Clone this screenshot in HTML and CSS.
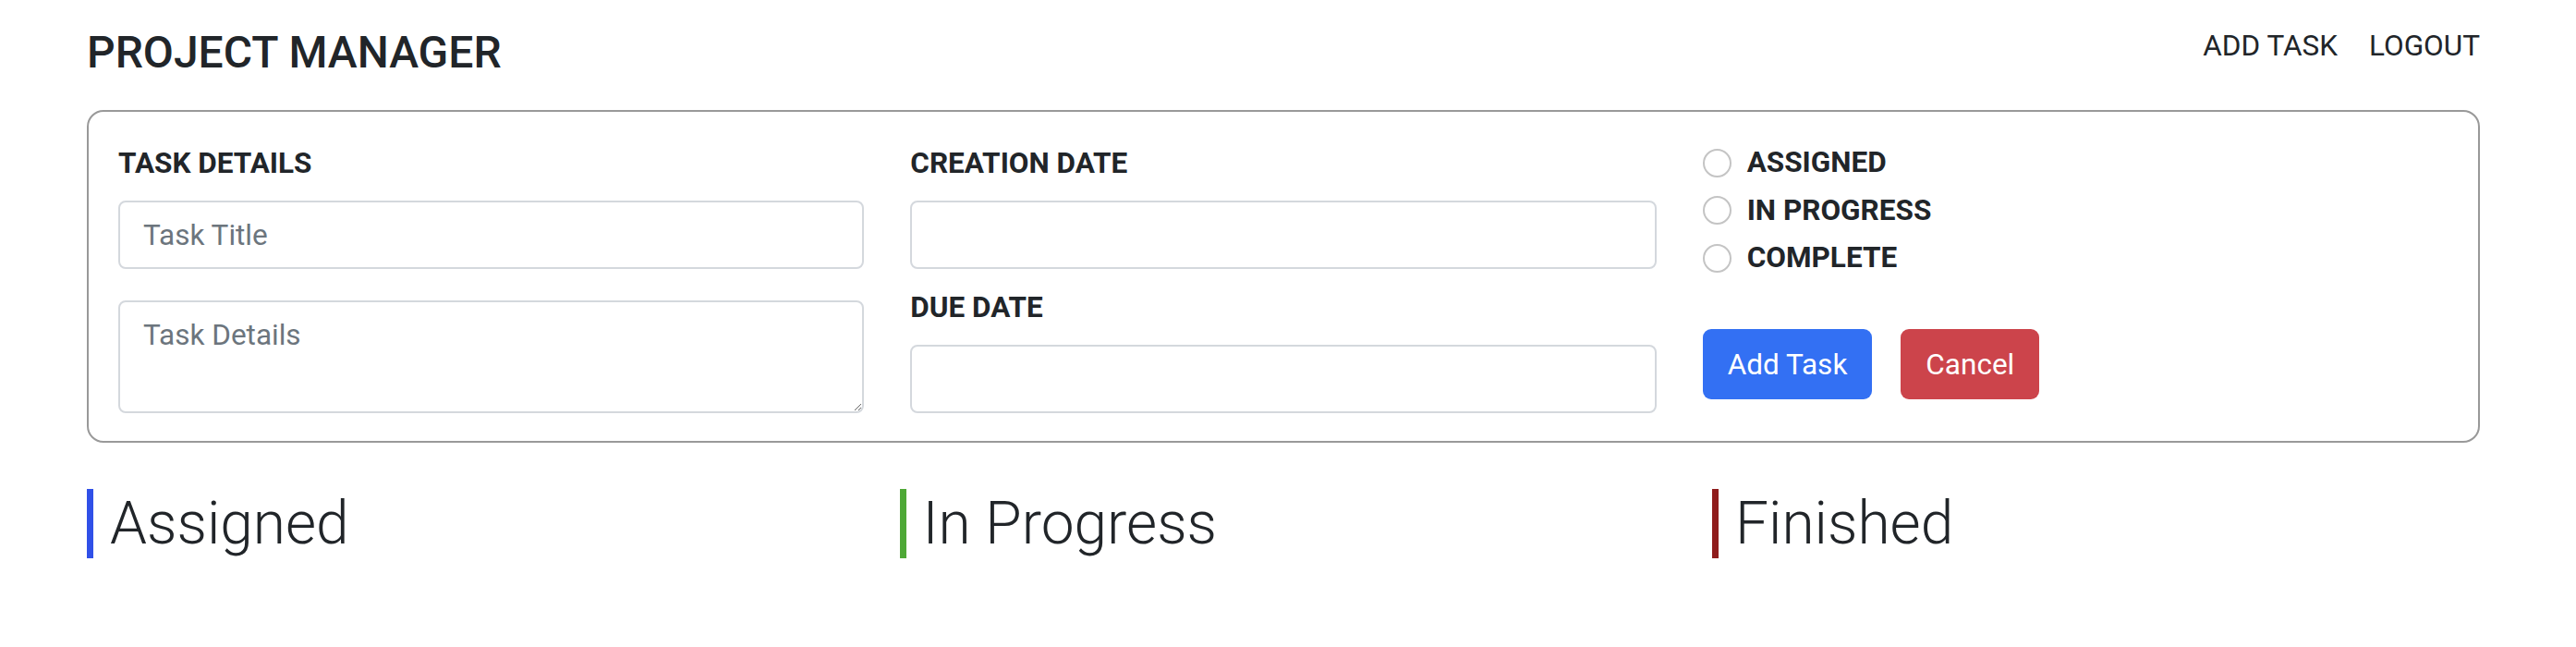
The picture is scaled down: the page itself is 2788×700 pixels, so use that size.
FILE: index.html
```html
<!DOCTYPE html>
<html lang="en">
<head>
<meta charset="utf-8">
<title>Project Manager</title>
<link rel="stylesheet" href="styles.css">
</head>
<body>
<div class="page">
  <header class="topbar">
    <h1 class="brand">PROJECT MANAGER</h1>
    <nav class="nav">
      <a class="nav-link" href="#">ADD TASK</a>
      <a class="nav-link" href="#">LOGOUT</a>
    </nav>
  </header>

  <form class="task-card">
    <div class="col">
      <label class="field-label">TASK DETAILS</label>
      <input class="control" type="text" placeholder="Task Title">
      <textarea class="control area" placeholder="Task Details"></textarea>
    </div>
    <div class="col">
      <div class="group">
        <label class="field-label">CREATION DATE</label>
        <input class="control" type="text">
      </div>
      <div class="group">
        <label class="field-label">DUE DATE</label>
        <input class="control" type="text">
      </div>
    </div>
    <div class="col">
      <div class="radios">
        <label class="radio-row"><input class="radio" type="radio" name="status"><span>ASSIGNED</span></label>
        <label class="radio-row"><input class="radio" type="radio" name="status"><span>IN PROGRESS</span></label>
        <label class="radio-row"><input class="radio" type="radio" name="status"><span>COMPLETE</span></label>
      </div>
      <div class="actions">
        <button type="button" class="btn btn-primary">Add Task</button>
        <button type="button" class="btn btn-danger">Cancel</button>
      </div>
    </div>
  </form>

  <section class="lanes">
    <h2 class="lane-title lane-blue">Assigned</h2>
    <h2 class="lane-title lane-green">In Progress</h2>
    <h2 class="lane-title lane-red">Finished</h2>
  </section>
</div>
</body>
</html>
```

FILE: styles.css
```css
* { box-sizing: border-box; }

html, body {
  margin: 0;
  padding: 0;
  background: #ffffff;
}

body {
  font-family: Roboto, "Liberation Sans", Arial, sans-serif;
  color: #212529;
}

.page {
  padding: 27px 104px 0 94px;
}

.topbar {
  display: flex;
  justify-content: space-between;
  align-items: flex-start;
}

.brand {
  margin: 0;
  font-size: 48px;
  line-height: 59px;
  font-weight: 500;
  color: #212529;
}

.nav {
  display: flex;
  gap: 34px;
}

.nav-link {
  font-size: 31.5px;
  line-height: 46px;
  color: #212529;
  text-decoration: none;
}

.task-card {
  margin-top: 33px;
  border: 2px solid #999999;
  border-radius: 18px;
  padding: 35px 32px 30px 32px;
  display: grid;
  grid-template-columns: repeat(3, 1fr);
  column-gap: 50px;
}

.col {
  display: flex;
  flex-direction: column;
}

.field-label {
  display: block;
  font-size: 31.5px;
  line-height: 42px;
  font-weight: 700;
  margin-bottom: 19px;
}

.group + .group {
  margin-top: 21px;
}

.control {
  display: block;
  width: 100%;
  height: 74px;
  border: 2px solid #d4d8dd;
  border-radius: 8px;
  padding: 0 25px;
  font-family: Roboto, "Liberation Sans", Arial, sans-serif;
  font-size: 31.5px;
  color: #212529;
  background: #ffffff;
  outline: none;
}

.control::placeholder {
  color: #6c757d;
}

.area {
  margin-top: 34px;
  height: 122px;
  padding-top: 12px;
  line-height: 47px;
  resize: vertical;
}

.radios {
  display: flex;
  flex-direction: column;
  gap: 9.7px;
  margin-top: -1px;
}

.radio-row {
  display: flex;
  align-items: center;
  height: 42px;
  font-size: 31.5px;
  line-height: 42px;
  font-weight: 700;
}

.radio {
  appearance: none;
  -webkit-appearance: none;
  width: 31px;
  height: 31px;
  margin: 0 17px 0 0;
  border: 2px solid #c4c4c4;
  border-radius: 50%;
  background: #ffffff;
  flex: none;
}

.actions {
  display: flex;
  gap: 31px;
  margin-top: 56px;
}

.btn {
  height: 76px;
  padding: 0 27px;
  border: none;
  border-radius: 9px;
  font-family: Roboto, "Liberation Sans", Arial, sans-serif;
  font-size: 31.5px;
  font-weight: 400;
  color: #ffffff;
}

.btn-primary { background: #3370f3; }
.btn-danger { background: #cc444b; }

.lanes {
  margin-top: 50px;
  display: grid;
  grid-template-columns: repeat(3, 1fr);
  column-gap: 48.5px;
}

.lane-title {
  margin: 0;
  height: 75px;
  border-left: 7px solid;
  padding-left: 18px;
  font-size: 64px;
  line-height: 75px;
  font-weight: 300;
  color: #212529;
}

.lane-blue { border-left-color: #3050e8; }
.lane-green { border-left-color: #4ea836; }
.lane-red { border-left-color: #8f1c1c; }
```
